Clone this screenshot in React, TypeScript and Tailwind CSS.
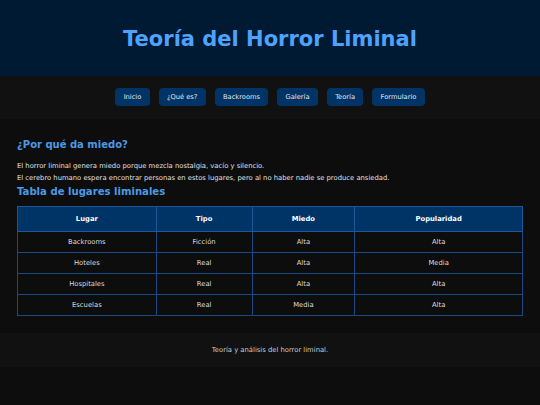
import React from "react";

const navItems = ["Inicio", "¿Qué es?", "Backrooms", "Galería", "Teoría", "Formulario"];

const rows = [
  ["Backrooms", "Ficción", "Alta", "Alta"],
  ["Hoteles", "Real", "Alta", "Media"],
  ["Hospitales", "Real", "Alta", "Alta"],
  ["Escuelas", "Real", "Media", "Alta"],
];

const colW = ["w-[139px]", "w-[96px]", "w-[103px]", "w-[168px]"];

export default function App() {
  return (
    <div
      className="min-h-[405px] bg-[#0d0d0d] text-[#dddddd]"
      style={{ fontFamily: '"DejaVu Sans", Verdana, sans-serif' }}
    >
      <header className="h-[76px] bg-[#001a33] flex items-center justify-center pt-[2px]">
        <h1 className="text-[21px] font-bold text-[#4da3ff] leading-none">
          Teoría del Horror Liminal
        </h1>
      </header>

      <nav className="h-[43px] bg-[#111111] flex items-start justify-center gap-[9px] pt-[12px]">
        {navItems.map((n) => (
          <a
            key={n}
            className="bg-[#003366] text-[#e6e6e6] text-[6.7px] leading-[8px] px-[8.3px] py-[5px] rounded-[4px]"
          >
            {n}
          </a>
        ))}
      </nav>

      <main className="px-[17px]">
        <h2 className="pt-[20px] text-[10px] leading-[12px] font-bold text-[#4a9ae6]">
          ¿Por qué da miedo?
        </h2>
        <p className="mt-[10px] text-[6.8px] leading-[11.7px] text-[#e0e0e0]">
          El horror liminal genera miedo porque mezcla nostalgia, vacío y silencio.
          <br />
          El cerebro humano espera encontrar personas en estos lugares, pero al no haber nadie se produce ansiedad.
        </p>
        <h2 className="mt-[2px] text-[10.1px] leading-[12px] font-bold text-[#4a9ae6]">
          Tabla de lugares liminales
        </h2>
        <table className="mt-[8px] w-[506px] border-collapse text-[6.8px] leading-[8px]">
          <thead>
            <tr className="bg-[#003366]">
              {["Lugar", "Tipo", "Miedo", "Popularidad"].map((h, i) => (
                <th
                  key={h}
                  className={`${colW[i]} h-[25px] border border-[#1f5599] text-white font-bold text-center`}
                >
                  {h}
                </th>
              ))}
            </tr>
          </thead>
          <tbody>
            {rows.map((r) => (
              <tr key={r[0]}>
                {r.map((c, i) => (
                  <td
                    key={i}
                    className="h-[21px] border border-[#1a4a85] text-center text-[#dcdcdc]"
                  >
                    {c}
                  </td>
                ))}
              </tr>
            ))}
          </tbody>
        </table>
      </main>

      <footer className="mt-[17px] h-[34px] bg-[#111111] flex items-center justify-center text-[6.8px] text-[#cccccc]">
        Teoría y análisis del horror liminal.
      </footer>
    </div>
  );
}
